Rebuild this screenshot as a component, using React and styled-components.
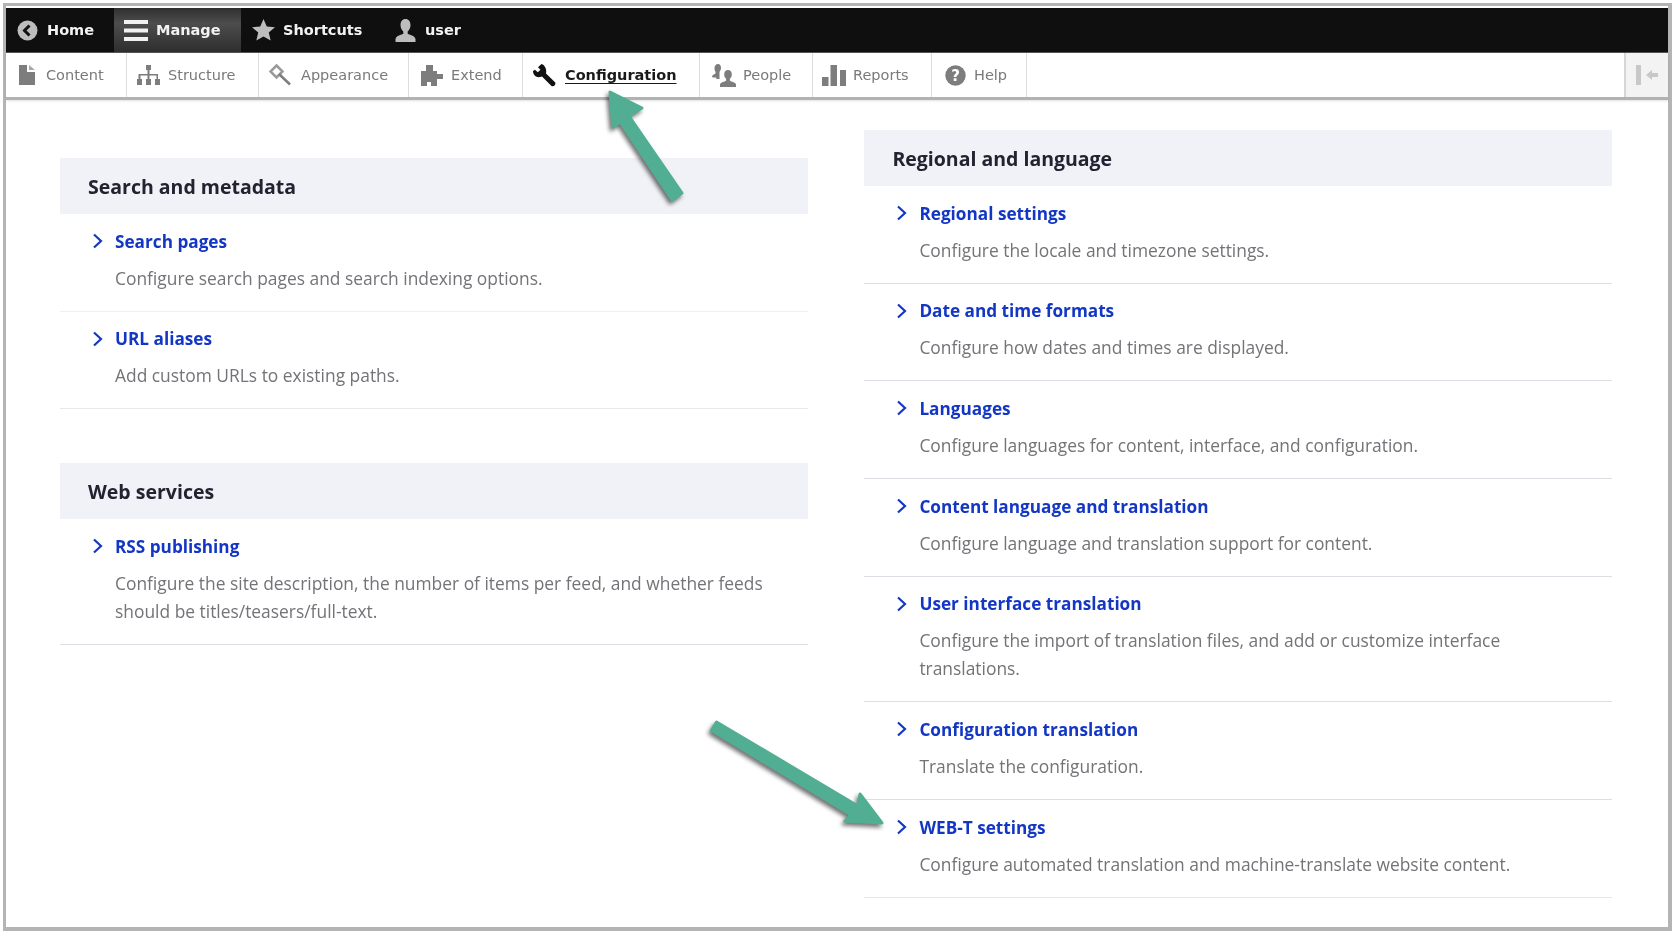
import React from 'react';
import styled, { createGlobalStyle } from 'styled-components';

const Global = createGlobalStyle`
  html, body { margin: 0; padding: 0; background: #fff; }
  body { width: 1676px; height: 940px; overflow: hidden; position: relative; }
`;

const Page = styled.div`
  position: relative;
  width: 1676px;
  height: 940px;
  padding: 3px 0 0 3px;
  box-sizing: border-box;
  filter: blur(0.6px);
`;
const Frame = styled.div`
  width: 1669px;
  height: 928px;
  box-sizing: border-box;
  border: 3px solid #b4b4b4;
  border-right-width: 4px;
  border-bottom-width: 4px;
  padding-top: 2px;
  background: #fff;
`;
const TopBar = styled.div`
  display: flex;
  height: 45px;
  background: #0f0f0f;
  border-bottom: 1px solid #555;
  box-sizing: border-box;
`;
const TopTab = styled.div`
  display: flex;
  align-items: center;
  gap: ${p => p.$gap}px;
  width: ${p => p.$width}px;
  padding-left: ${p => p.$pad}px;
  box-sizing: border-box;
  font: bold 14.5px "DejaVu Sans", sans-serif;
  color: #f2f2f2;
  background: ${p => p.$active ? 'linear-gradient(#303030, #4d4d4d 35%, #2e2e2e)' : 'transparent'};
`;
const SubBar = styled.div`
  display: flex;
  height: 47px;
  background: #fff;
  box-sizing: border-box;
  border-bottom: 3px solid #b2b2b2;
  box-shadow: 0 1px 2px rgba(0,0,0,.12);
`;
const SubTab = styled.div`
  display: flex;
  align-items: center;
  gap: ${p => p.$gap}px;
  width: ${p => p.$width}px;
  padding-left: ${p => p.$pad}px;
  box-sizing: border-box;
  border-right: 1px solid #dcdcdc;
  font: 14.5px "DejaVu Sans", sans-serif;
  color: #7a7a7a;
`;
const ActiveLabel = styled.span`
  font-weight: bold;
  color: #1a1a1a;
  text-decoration: underline;
  text-underline-offset: 3px;
`;
const Toggle = styled.div`
  margin-left: auto;
  width: 44px;
  display: flex;
  align-items: center;
  justify-content: center;
  background: #f3f3f3;
  border-left: 2px solid #d6d6d6;
  box-sizing: border-box;
`;
const Columns = styled.div`
  display: grid;
  grid-template-columns: 748px 748px;
  column-gap: 56.4px;
  padding: 30px 0 0 54px;
`;
const Column = styled.div`
  display: flex;
  flex-direction: column;
  gap: 54px;
  padding-top: ${p => p.$top}px;
`;
const Section = styled.section``;
const Header = styled.h3`
  margin: 0;
  height: 56px;
  padding-left: 28px;
  display: flex;
  align-items: center;
  background: #f1f2f7;
  font: 700 19.5px "Open Sans", sans-serif;
  color: #222330;
`;
const Item = styled.div`
  padding: 15px 40px 19.2px 55px;
  border-bottom: 1px solid ${p => p.$line};
  position: relative;
`;
const Title = styled.a`
  display: flex;
  align-items: center;
  height: 24px;
  font: 700 17.2px "Open Sans", sans-serif;
  color: #1337c4;
`;
const Chevron = styled.svg`
  position: absolute;
  left: 32px;
  top: 19px;
`;
const Desc = styled.p`
  margin: 10.500px 0 0;
  font: 17.4px/28px "Open Sans", sans-serif;
  color: #737378;
`;
const Arrows = styled.svg`
  position: absolute;
  left: 0;
  top: 0;
  pointer-events: none;
  filter: drop-shadow(-2px 3px 2px rgba(0,0,0,.55));
`;

const G = '#7d7d7d';
const L = '#bdbdbd';

const HomeIcon = () => (
  <svg width="21" height="21" viewBox="0 0 21 21"><circle cx="10.5" cy="10.5" r="10" fill={L} /><path d="M12.5 5.5 7.5 10.5l5 5" fill="none" stroke="#111" strokeWidth="3" /></svg>
);
const MenuIcon = () => (
  <svg width="24" height="23" viewBox="0 0 24 23"><path d="M0 1h24v4H0zM0 9.5h24v4H0zM0 18h24v4H0z" fill="#f0f0f0" /></svg>
);
const StarIcon = () => (
  <svg width="23" height="22" viewBox="0 0 24 23"><path d="M12 0l3.4 7.8 8.6.8-6.5 5.6 2 8.4L12 18.2 4.500 22.600l2-8.400L0 8.600l8.600-.8z" fill={L} /></svg>
);
const UserIcon = () => (
  <svg width="23" height="23" viewBox="0 0 23 23"><path d="M11.500 0c3.200 0 5 2.600 5 6 0 2.800-1.200 5.300-2.800 6.500v2.300c2 1.200 6.800 1.600 7.800 5.200v3H1.500v-3c1-3.600 5.800-4 7.800-5.200v-2.300C7.700 11.300 6.500 8.800 6.500 6c0-3.400 1.800-6 5-6z" fill={L} /></svg>
);
const FileIcon = () => (
  <svg width="16" height="20" viewBox="0 0 16 20"><path d="M0 0h8v7h8v13H0z" fill={G} /><path d="M10 0l6 5h-6z" fill="#a8a8a8" /></svg>
);
const TreeIcon = () => (
  <svg width="23" height="20" viewBox="0 0 23 20"><path d="M9 0h5v5h-1.500v4H21v5h2v6h-5v-6h1.500v-3.500h-7V14H14v6H9v-6h1.500v-3.500h-7V14H5v6H0v-6h1.500V9h9V5H9z" fill={G} /></svg>
);
const BrushIcon = () => (
  <svg width="23" height="22" viewBox="0 0 23 22"><path d="M7.500 1.500 13.500 7.500 7.500 13.500 1.500 7.500Z" fill="none" stroke="#9a9a9a" strokeWidth="2.500" /><path d="M10 10l11 10.500" stroke={G} strokeWidth="2.500" /></svg>
);
const PuzzleIcon = () => (
  <svg width="22" height="21" viewBox="0 0 22 21"><path d="M0 6h5V0h7v6h4v3h6v5h-6v7h-6v-4H6v4H0z" fill={G} /></svg>
);
const WrenchIcon = () => (
  <svg width="24" height="23" viewBox="0 0 24 23"><path d="M8.500 0L5 3.200l2.500 2.600-2.700 2.500L2 5.800 0 7c0 4 3.500 6.800 7 6l2-.5 9.500 9.500c2 1 4.500-1 3.800-3.500L13 9.500c1-4-1-8.500-4.500-9.500z" fill="#111" /></svg>
);
const PeopleIcon = () => (
  <svg width="24" height="23" viewBox="0 0 24 23"><path d="M6 0c2 0 3 1.800 3 3.800 0 1.800-.7 3.200-1.500 3.900v7.300H4.300v-1.500H1.500c-.6 0-1.500-.4-1.500-1 .6-1.800 2.800-2.200 3.500-2.900V7.700C2.700 7 2.500 5.600 2.500 3.800 2.500 1.800 4 0 6 0z" fill={G} /><path d="M16 6c2.500 0 3.800 2 3.800 4.300 0 2-.8 3.700-1.900 4.500v1.900c1.400 1 5.200 1.200 6.100 3.600V23H8v-2.700c.9-2.400 4.700-2.600 6.100-3.600v-1.900c-1.100-.8-1.900-2.500-1.900-4.500C12.200 8 13.500 6 16 6z" fill={G} /></svg>
);
const BarsIcon = () => (
  <svg width="24" height="21" viewBox="0 0 24 21"><path d="M0 12h6.500v9H0zM8.500 0H15v21H8.500zM18 5h6v16h-6z" fill={G} /></svg>
);
const HelpIcon = () => (
  <svg width="21" height="21" viewBox="0 0 21 21"><circle cx="10.500" cy="10.500" r="10.200" fill={G} /><text x="10.500" y="16" textAnchor="middle" fontFamily="DejaVu Sans" fontWeight="bold" fontSize="15" fill="#fff">?</text></svg>
);
const CollapseIcon = () => (
  <svg width="22" height="20" viewBox="0 0 22 20"><path d="M0 0h5v20H0zM10 10l6-5v3h6v4h-6v3z" fill="#c8c8c8" /></svg>
);

const Row = ({ title, desc, line = '#dedde3' }) => (
  <Item $line={line}>
    <Chevron width="11" height="16" viewBox="0 0 11 16"><path d="M2 1.500 9 8l-7 6.500" fill="none" stroke="#1337c4" strokeWidth="2.200" /></Chevron>
    <Title>{title}</Title>
    <Desc>{desc}</Desc>
  </Item>
);

export default function App() {
  return (
    <>
      <Global />
      <Page>
        <Frame>
          <TopBar>
            <TopTab $width={108} $pad={11} $gap={9}><HomeIcon />Home</TopTab>
            <TopTab $width={127} $pad={10} $gap={8} $active><MenuIcon />Manage</TopTab>
            <TopTab $width={144} $pad={11} $gap={8}><StarIcon />Shortcuts</TopTab>
            <TopTab $width={100} $pad={9} $gap={8}><UserIcon />user</TopTab>
          </TopBar>
          <SubBar>
            <SubTab $width={121} $pad={13} $gap={11}><FileIcon />Content</SubTab>
            <SubTab $width={132} $pad={10} $gap={8}><TreeIcon />Structure</SubTab>
            <SubTab $width={150} $pad={10} $gap={9}><BrushIcon />Appearance</SubTab>
            <SubTab $width={114} $pad={12} $gap={8}><PuzzleIcon />Extend</SubTab>
            <SubTab $width={177} $pad={10} $gap={8}><WrenchIcon /><ActiveLabel>Configuration</ActiveLabel></SubTab>
            <SubTab $width={113} $pad={12} $gap={7}><PeopleIcon />People</SubTab>
            <SubTab $width={119} $pad={9} $gap={7}><BarsIcon />Reports</SubTab>
            <SubTab $width={95} $pad={13} $gap={8}><HelpIcon />Help</SubTab>
            <Toggle><CollapseIcon /></Toggle>
          </SubBar>
          <Columns>
            <Column $top={28}>
              <Section>
                <Header>Search and metadata</Header>
                <Row title="Search pages" desc="Configure search pages and search indexing options." line="#efeff2" />
                <Row title="URL aliases" desc="Add custom URLs to existing paths." line="#e8e8ec" />
              </Section>
              <Section>
                <Header>Web services</Header>
                <Row title="RSS publishing" desc="Configure the site description, the number of items per feed, and whether feeds should be titles/teasers/full-text." />
              </Section>
            </Column>
            <Column $top={0}>
              <Section>
                <Header>Regional and language</Header>
                <Row title="Regional settings" desc="Configure the locale and timezone settings." />
                <Row title="Date and time formats" desc="Configure how dates and times are displayed." />
                <Row title="Languages" desc="Configure languages for content, interface, and configuration." />
                <Row title="Content language and translation" desc="Configure language and translation support for content." />
                <Row title="User interface translation" desc="Configure the import of translation files, and add or customize interface translations." />
                <Row title="Configuration translation" desc="Translate the configuration." />
                <Row title="WEB-T settings" desc="Configure automated translation and machine-translate website content." line="#e8e8ec" />
              </Section>
            </Column>
          </Columns>
        </Frame>
        <Arrows width="1676" height="940" viewBox="0 0 1676 940">
          <path d="M610 92 642 108 629 116 682 193 672 200 620 122 613 127Z" fill="#52ae92" stroke="#52ae92" strokeWidth="3" strokeLinejoin="round" />
          <path d="M716.500 722 711.500 730.400 851 815 845 821 882 823 860 794 858 806Z" fill="#52ae92" stroke="#52ae92" strokeWidth="3" strokeLinejoin="round" />
        </Arrows>
      </Page>
    </>
  );
}
